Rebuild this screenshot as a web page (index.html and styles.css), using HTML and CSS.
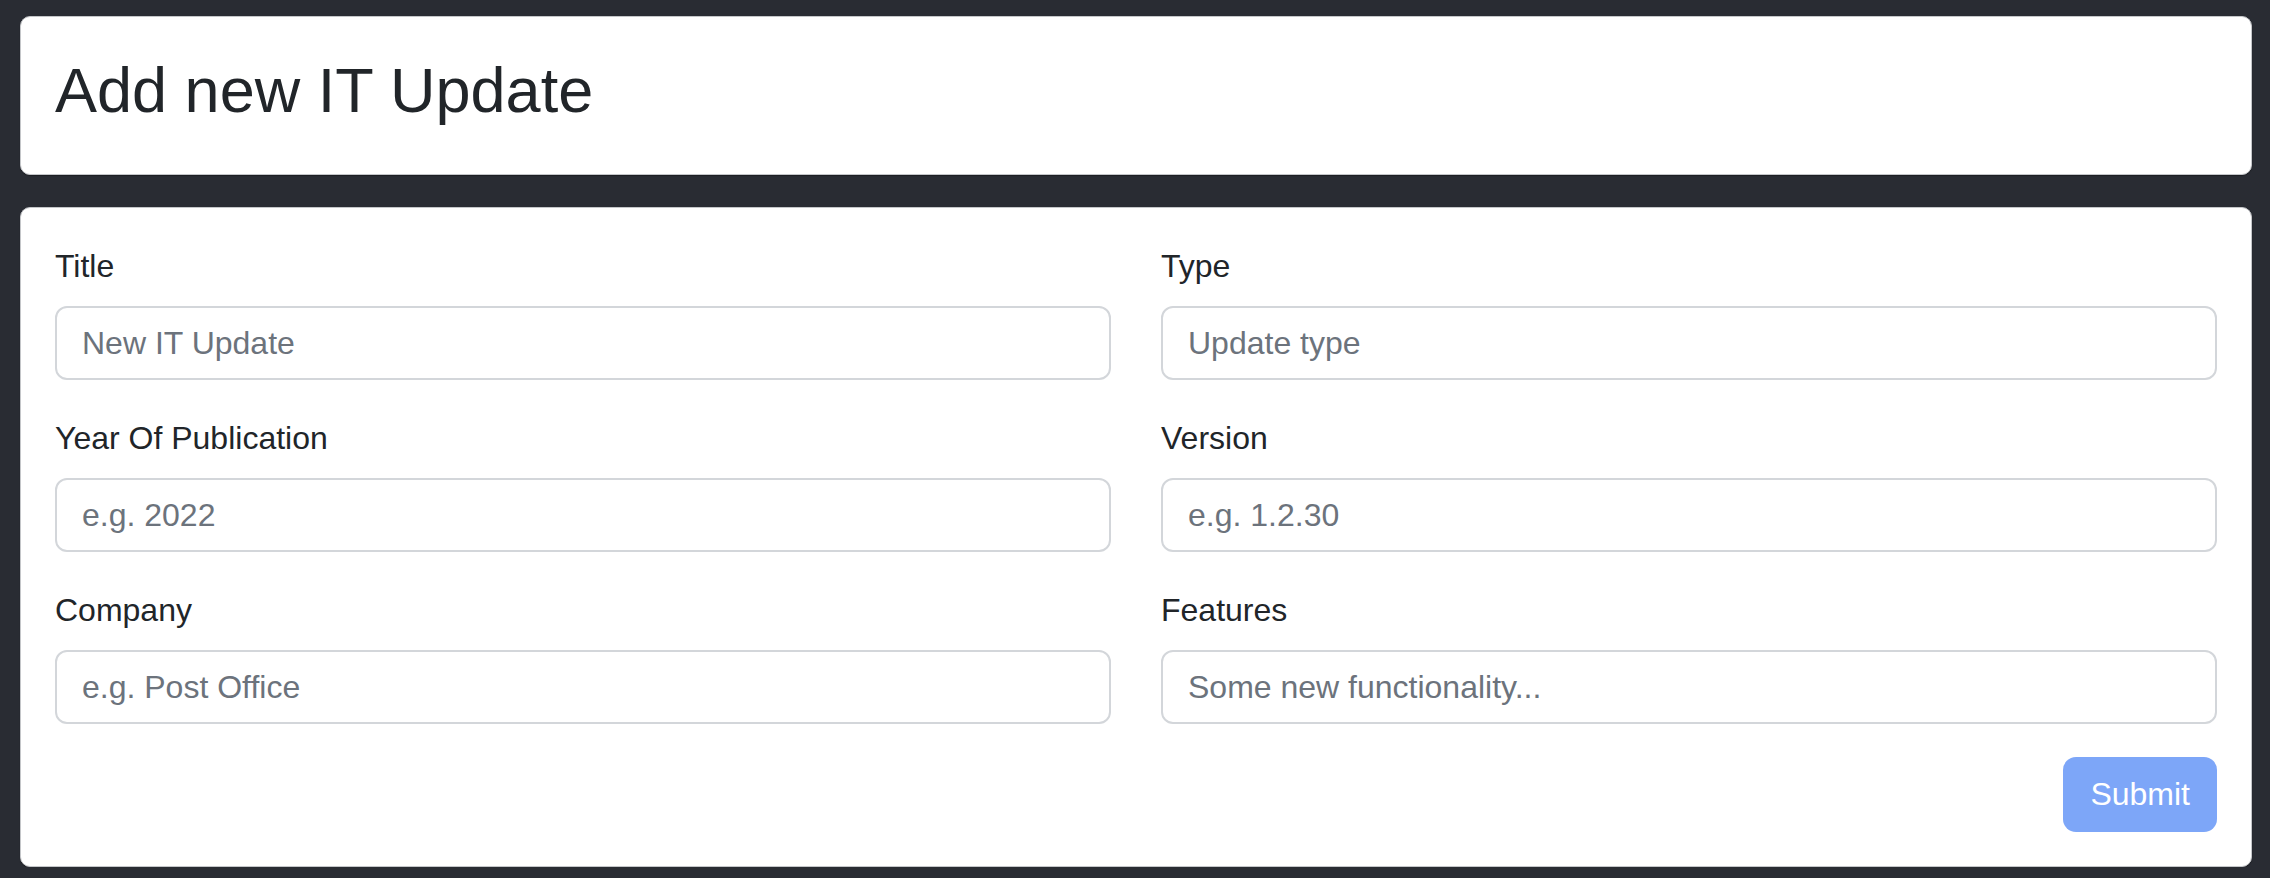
FILE: index.html
```html
<!DOCTYPE html>
<html lang="en">
<head>
<meta charset="utf-8">
<title>Add new IT Update</title>
<link rel="stylesheet" href="styles.css">
</head>
<body>
<main class="page">
  <section class="card header-card">
    <h1 class="page-title">Add new IT Update</h1>
  </section>
  <section class="card form-card">
    <form class="update-form">
      <div class="form-grid">
        <div class="field">
          <label class="field-label" for="title">Title</label>
          <input class="field-input" id="title" type="text" placeholder="New IT Update">
        </div>
        <div class="field">
          <label class="field-label" for="type">Type</label>
          <input class="field-input" id="type" type="text" placeholder="Update type">
        </div>
        <div class="field">
          <label class="field-label" for="year">Year Of Publication</label>
          <input class="field-input" id="year" type="text" placeholder="e.g. 2022">
        </div>
        <div class="field">
          <label class="field-label" for="version">Version</label>
          <input class="field-input" id="version" type="text" placeholder="e.g. 1.2.30">
        </div>
        <div class="field">
          <label class="field-label" for="company">Company</label>
          <input class="field-input" id="company" type="text" placeholder="e.g. Post Office">
        </div>
        <div class="field">
          <label class="field-label" for="features">Features</label>
          <input class="field-input" id="features" type="text" placeholder="Some new functionality...">
        </div>
      </div>
      <div class="actions">
        <button class="submit-btn" type="submit" disabled>Submit</button>
      </div>
    </form>
  </section>
</main>
</body>
</html>
```
FILE: styles.css
```css
html, body {
  margin: 0;
  padding: 0;
  background: #292c33;
}

body {
  font-family: "Liberation Sans", Arial, sans-serif;
  color: #212529;
}

.page {
  display: flex;
  flex-direction: column;
  gap: 32px;
  padding: 16px 18px 0 20px;
}

.card {
  background: #ffffff;
  border: 1px solid #c4c6c9;
  border-radius: 10px;
  box-shadow: 0 1px 1px rgba(0, 0, 0, 0.35);
}

.header-card {
  padding: 36px 34px 33px;
}

.page-title {
  margin: 0 0 12px;
  font-size: 63px;
  font-weight: 400;
  line-height: 1.2;
  color: #212529;
}

.form-card {
  padding: 34px 34px 34px;
}

.form-grid {
  display: grid;
  grid-template-columns: 1fr 1fr;
  column-gap: 50px;
  row-gap: 34px;
}

.field {
  display: flex;
  flex-direction: column;
}

.field-label {
  font-size: 32px;
  line-height: 48px;
  margin-bottom: 16px;
  color: #212529;
}

.field-input {
  box-sizing: border-box;
  height: 74px;
  width: 100%;
  padding: 12px 25px 10px;
  font-family: "Liberation Sans", Arial, sans-serif;
  font-size: 32px;
  line-height: 48px;
  color: #212529;
  background: #ffffff;
  border: 2px solid #d3d6da;
  border-radius: 12px;
  outline: none;
}

.field-input::placeholder {
  color: #6c737c;
  opacity: 1;
}

.actions {
  display: flex;
  justify-content: flex-end;
  margin-top: 33px;
}

.submit-btn {
  box-sizing: border-box;
  height: 75px;
  padding: 0 27px;
  font-family: "Liberation Sans", Arial, sans-serif;
  font-size: 32px;
  line-height: 48px;
  color: #ffffff;
  background: #7da6f8;
  border: none;
  border-radius: 13px;
}
```
